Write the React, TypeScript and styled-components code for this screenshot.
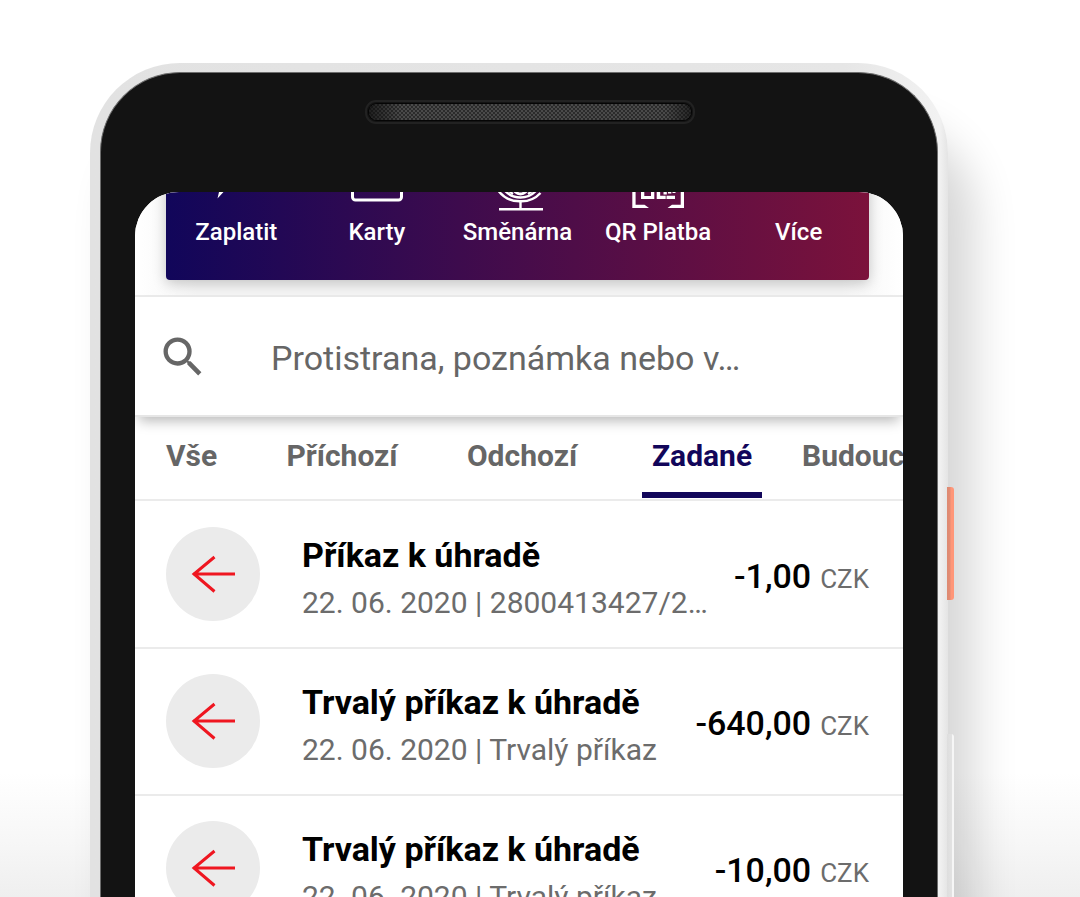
import React from "react";
import styled, { createGlobalStyle } from "styled-components";
import { MdSearch } from "react-icons/md";

const GlobalStyle = createGlobalStyle`
  *, *::before, *::after { box-sizing: border-box; }
  body {
    margin: 0;
    background: #fff;
    font-family: Roboto, "Liberation Sans", sans-serif;
  }
  button, input { font-family: inherit; }
`;

const Stage = styled.main`
  height: 100vh;
  overflow: hidden;
  padding: 63px 132px 0 90px;
  background: linear-gradient(to top, #efefef 0, #f7f7f7 56px, #fff 124px);
`;

const Phone = styled.div`
  position: relative;
  min-height: 100%;
  padding: 9px 10px 0 10px;
  border-radius: 90px 90px 0 0;
  background: linear-gradient(to right, #e2e2e2 0, #e4e4e4 50%, #e6e6e6 88%, #f2f2f2 99%, #e4e4e4 100%);
  box-shadow: 26px 62px 44px 0 rgba(0, 0, 0, 0.16);
`;

const SideKey = styled.span<{ $top: number; $height: number; $fill: string }>`
  position: absolute;
  right: -6px;
  top: ${(p) => p.$top}px;
  width: 7px;
  height: ${(p) => p.$height}px;
  border-radius: 0 3px 3px 0;
  background: ${(p) => p.$fill};
`;

const Bezel = styled.div`
  min-height: calc(100vh - 72px);
  padding: 27px 34px 0 34px;
  border: 1px solid #6d6d6d;
  border-bottom: 0;
  border-radius: 80px 80px 0 0;
  background: #131313;
`;

const SpeakerBar = styled.div`
  display: flex;
  justify-content: center;
  height: 92px;
  padding-left: 22px;
`;

const Screen = styled.div`
  overflow: hidden;
  height: calc(100vh - 192px);
  border-radius: 44px 44px 0 0;
  background: #fff;
`;

const Hero = styled.header`
  padding: 0 34px 15px 31px;
  border-bottom: 2px solid #ebebeb;
  background: linear-gradient(to right, #fff 0, #f5f5f5 8%, #f5f5f5 92%, #fff 100%);
`;

const ActionCard = styled.nav`
  display: grid;
  grid-template-columns: repeat(5, 1fr);
  margin-top: -60px;
  padding: 20px 0 33px;
  border-radius: 4px;
  background: linear-gradient(to right, #11065a, #7b123b);
  box-shadow: 0 3px 14px rgba(0, 0, 0, 0.22);
`;

const Action = styled.button`
  display: flex;
  flex-direction: column;
  align-items: center;
  gap: 5px;
  padding: 0;
  border: 0;
  background: none;
  color: #fff;
  font-size: 24px;
  font-weight: 500;
  line-height: 30px;
  white-space: nowrap;

  svg { display: block; }
`;

const SearchBar = styled.label`
  position: relative;
  display: flex;
  align-items: center;
  gap: 62px;
  height: 120px;
  padding: 2px 24px 0 22px;
  border-bottom: 2px solid #e6e6e6;
  background: #fff;
  box-shadow: 0 8px 12px -4px rgba(0, 0, 0, 0.28);
  color: #666;

  svg { flex: none; }
`;

const SearchInput = styled.input`
  flex: 1;
  min-width: 0;
  padding: 2px 0 0;
  border: 0;
  outline: 0;
  background: none;
  color: #666;
  font-size: 34px;
  line-height: 40px;
  text-overflow: ellipsis;

  &::placeholder { color: #666; opacity: 1; }
`;

const Tabs = styled.div`
  display: grid;
  grid-template-columns: 86px repeat(3, 180px) max-content;
  overflow: hidden;
  height: 84px;
  padding: 0 0 1px 31px;
  border-bottom: 2px solid #ebebeb;
`;

const Tab = styled.button<{ $align: "start" | "center" }>`
  display: flex;
  flex-direction: column;
  justify-content: flex-end;
  align-items: ${(p) => p.$align};
  padding: 0;
  border: 0;
  background: none;
  color: #666;
  font-size: 30px;
  font-weight: 700;
  line-height: 36px;
  white-space: nowrap;

  &::after {
    content: "";
    width: 120px;
    max-width: 100%;
    height: 6px;
    margin-top: 18px;
  }

  &[aria-selected="true"] { color: #12065a; }
  &[aria-selected="true"]::after { background: #12065a; }
  &:last-child { padding-left: 10px; }
`;

const List = styled.ul`
  margin: 0;
  padding: 1px 0 0;
  list-style: none;
`;

const Row = styled.li`
  display: flex;
  align-items: center;
  height: 147px;
  padding: 0 34px 2px 31px;
  border-bottom: 2px solid #ebebeb;
`;

const Badge = styled.span`
  display: flex;
  flex: none;
  align-items: center;
  justify-content: center;
  width: 94px;
  height: 94px;
  margin-right: 42px;
  border-radius: 50%;
  background: #ebebeb;
`;

const Info = styled.div`
  flex: 1;
  min-width: 0;
  padding-top: 10px;
`;

const Title = styled.div`
  color: #000;
  font-size: 34px;
  font-weight: 700;
  line-height: 48px;
  white-space: nowrap;
`;

const Detail = styled.div`
  overflow: hidden;
  color: #6c6c6c;
  font-size: 30px;
  line-height: 48px;
  text-overflow: ellipsis;
  white-space: nowrap;
`;

const Amount = styled.div`
  display: flex;
  flex: none;
  align-items: baseline;
  gap: 9px;
  margin-left: 20px;
  padding-top: 8px;
  color: #000;
  font-size: 34px;
  font-weight: 500;
  line-height: 42px;
`;

const Currency = styled.span`
  color: #6c6c6c;
  font-size: 26px;
  font-weight: 400;
`;

const Speaker = () => (
  <svg width="330" height="24" viewBox="0 0 330 24" aria-hidden="true">
    <defs>
      <pattern id="mesh" width="4" height="4" patternUnits="userSpaceOnUse">
        <rect width="4" height="4" fill="#4a4a4a" />
        <circle cx="1" cy="1" r="0.9" fill="#1c1c1c" />
        <circle cx="3" cy="3" r="0.9" fill="#1c1c1c" />
      </pattern>
      <linearGradient id="ends">
        <stop offset="0" stopColor="#0c0c0c" stopOpacity="0.7" />
        <stop offset="0.1" stopColor="#0c0c0c" stopOpacity="0" />
        <stop offset="0.92" stopColor="#0c0c0c" stopOpacity="0" />
        <stop offset="1" stopColor="#0c0c0c" stopOpacity="0.6" />
      </linearGradient>
    </defs>
    <rect x="1" y="1" width="328" height="22" rx="10" fill="none" stroke="#222" strokeWidth="2" />
    <rect x="3" y="3" width="324" height="18" rx="9" fill="#050505" />
    <rect x="4" y="4" width="322" height="16" rx="8" fill="url(#mesh)" />
    <rect x="4" y="4" width="322" height="16" rx="8" fill="url(#ends)" />
  </svg>
);

const icons = {
  bolt: (
    <path d="M11.5 46.5 16 27H10L22 4h14l-6 17h5Z" fill="#fff" />
  ),
  card: (
    <g fill="none" stroke="#fff" strokeWidth="3">
      <rect x="5.5" y="13" width="49" height="35" rx="3" />
      <path d="M5.5 22h49" />
    </g>
  ),
  exchange: (
    <g fill="none" stroke="#fff" strokeWidth="2.4">
      <path d="M12 57.3h44M33.5 49v8" />
      <path d="M10.5 37.5A27 27 0 0 0 33.5 49.3 26 26 0 0 0 53.5 41" />
      <circle cx="33.5" cy="24.5" r="21" />
      <circle cx="33.5" cy="35" r="7" strokeWidth="3" />
      <path d="M20 36a18 18 0 0 0 6 6M47 36a18 18 0 0 1-6 6" />
    </g>
  ),
  qr: (
    <g fill="#fff">
      <path d="M4.3 36v20H21l-4.5-3.2H7.6V36ZM56 36v20H39.5l4.5-3.2h8.7V36Z" />
      <path d="M13 34v13h13.3V34H23v10h-6.7V34ZM28.7 36v11h9v-3.3h-5.5V36ZM38.5 43.7H47V47h-8.5ZM35.5 39.5h3.3v3h-3.3ZM40 38h3.3v3.5H40ZM44.5 36h3v5h-3Z" />
    </g>
  ),
  more: (
    <g fill="#fff">
      <circle cx="14" cy="20" r="4" />
      <circle cx="30" cy="20" r="4" />
      <circle cx="46" cy="20" r="4" />
    </g>
  ),
};

const actions: { label: string; icon: keyof typeof icons }[] = [
  { label: "Zaplatit", icon: "bolt" },
  { label: "Karty", icon: "card" },
  { label: "Směnárna", icon: "exchange" },
  { label: "QR Platba", icon: "qr" },
  { label: "Více", icon: "more" },
];

const tabs: { label: string; align: "start" | "center" }[] = [
  { label: "Vše", align: "start" },
  { label: "Příchozí", align: "center" },
  { label: "Odchozí", align: "center" },
  { label: "Zadané", align: "center" },
  { label: "Budoucí", align: "start" },
];

const payments = [
  { title: "Příkaz k úhradě", detail: "22. 06. 2020 | 2800413427/2…", amount: "-1,00" },
  { title: "Trvalý příkaz k úhradě", detail: "22. 06. 2020 | Trvalý příkaz", amount: "-640,00" },
  { title: "Trvalý příkaz k úhradě", detail: "22. 06. 2020 | Trvalý příkaz", amount: "-10,00" },
];

const ArrowLeft = () => (
  <svg width="44" height="40" viewBox="0 0 44 40" fill="none" stroke="#ef1620" strokeWidth="3" aria-hidden="true">
    <path d="M2 20h42M23.5 3 3 20l20.5 17.5" />
  </svg>
);

export default function App() {
  return (
    <>
      <GlobalStyle />
      <Stage>
        <Phone>
          <SideKey $top={424} $height={113} $fill="linear-gradient(to right, #dd8a72 0, #e38c74 40%, #ff9678 60%)" />
          <SideKey
            $top={671}
            $height={400}
            $fill="linear-gradient(to right, #dedede 0, #e2e2e2 65%, #f6f6f6 70%, #f6f6f6 100%)"
          />
          <Bezel>
            <SpeakerBar>
              <Speaker />
            </SpeakerBar>
            <Screen>
              <Hero>
                <ActionCard>
                  {actions.map((a) => (
                    <Action key={a.label} type="button">
                      <svg width="60" height="60" viewBox="0 0 60 60" aria-hidden="true">
                        {icons[a.icon]}
                      </svg>
                      {a.label}
                    </Action>
                  ))}
                </ActionCard>
              </Hero>
              <SearchBar>
                <MdSearch size={52} aria-hidden="true" />
                <SearchInput type="text" aria-label="Hledat" placeholder="Protistrana, poznámka nebo v…" />
              </SearchBar>
              <Tabs role="tablist">
                {tabs.map((t) => (
                  <Tab key={t.label} type="button" role="tab" aria-selected={t.label === "Zadané"} $align={t.align}>
                    {t.label}
                  </Tab>
                ))}
              </Tabs>
              <List>
                {payments.map((p) => (
                  <Row key={p.amount}>
                    <Badge>
                      <ArrowLeft />
                    </Badge>
                    <Info>
                      <Title>{p.title}</Title>
                      <Detail>{p.detail}</Detail>
                    </Info>
                    <Amount>
                      {p.amount}
                      <Currency>CZK</Currency>
                    </Amount>
                  </Row>
                ))}
              </List>
            </Screen>
          </Bezel>
        </Phone>
      </Stage>
    </>
  );
}
